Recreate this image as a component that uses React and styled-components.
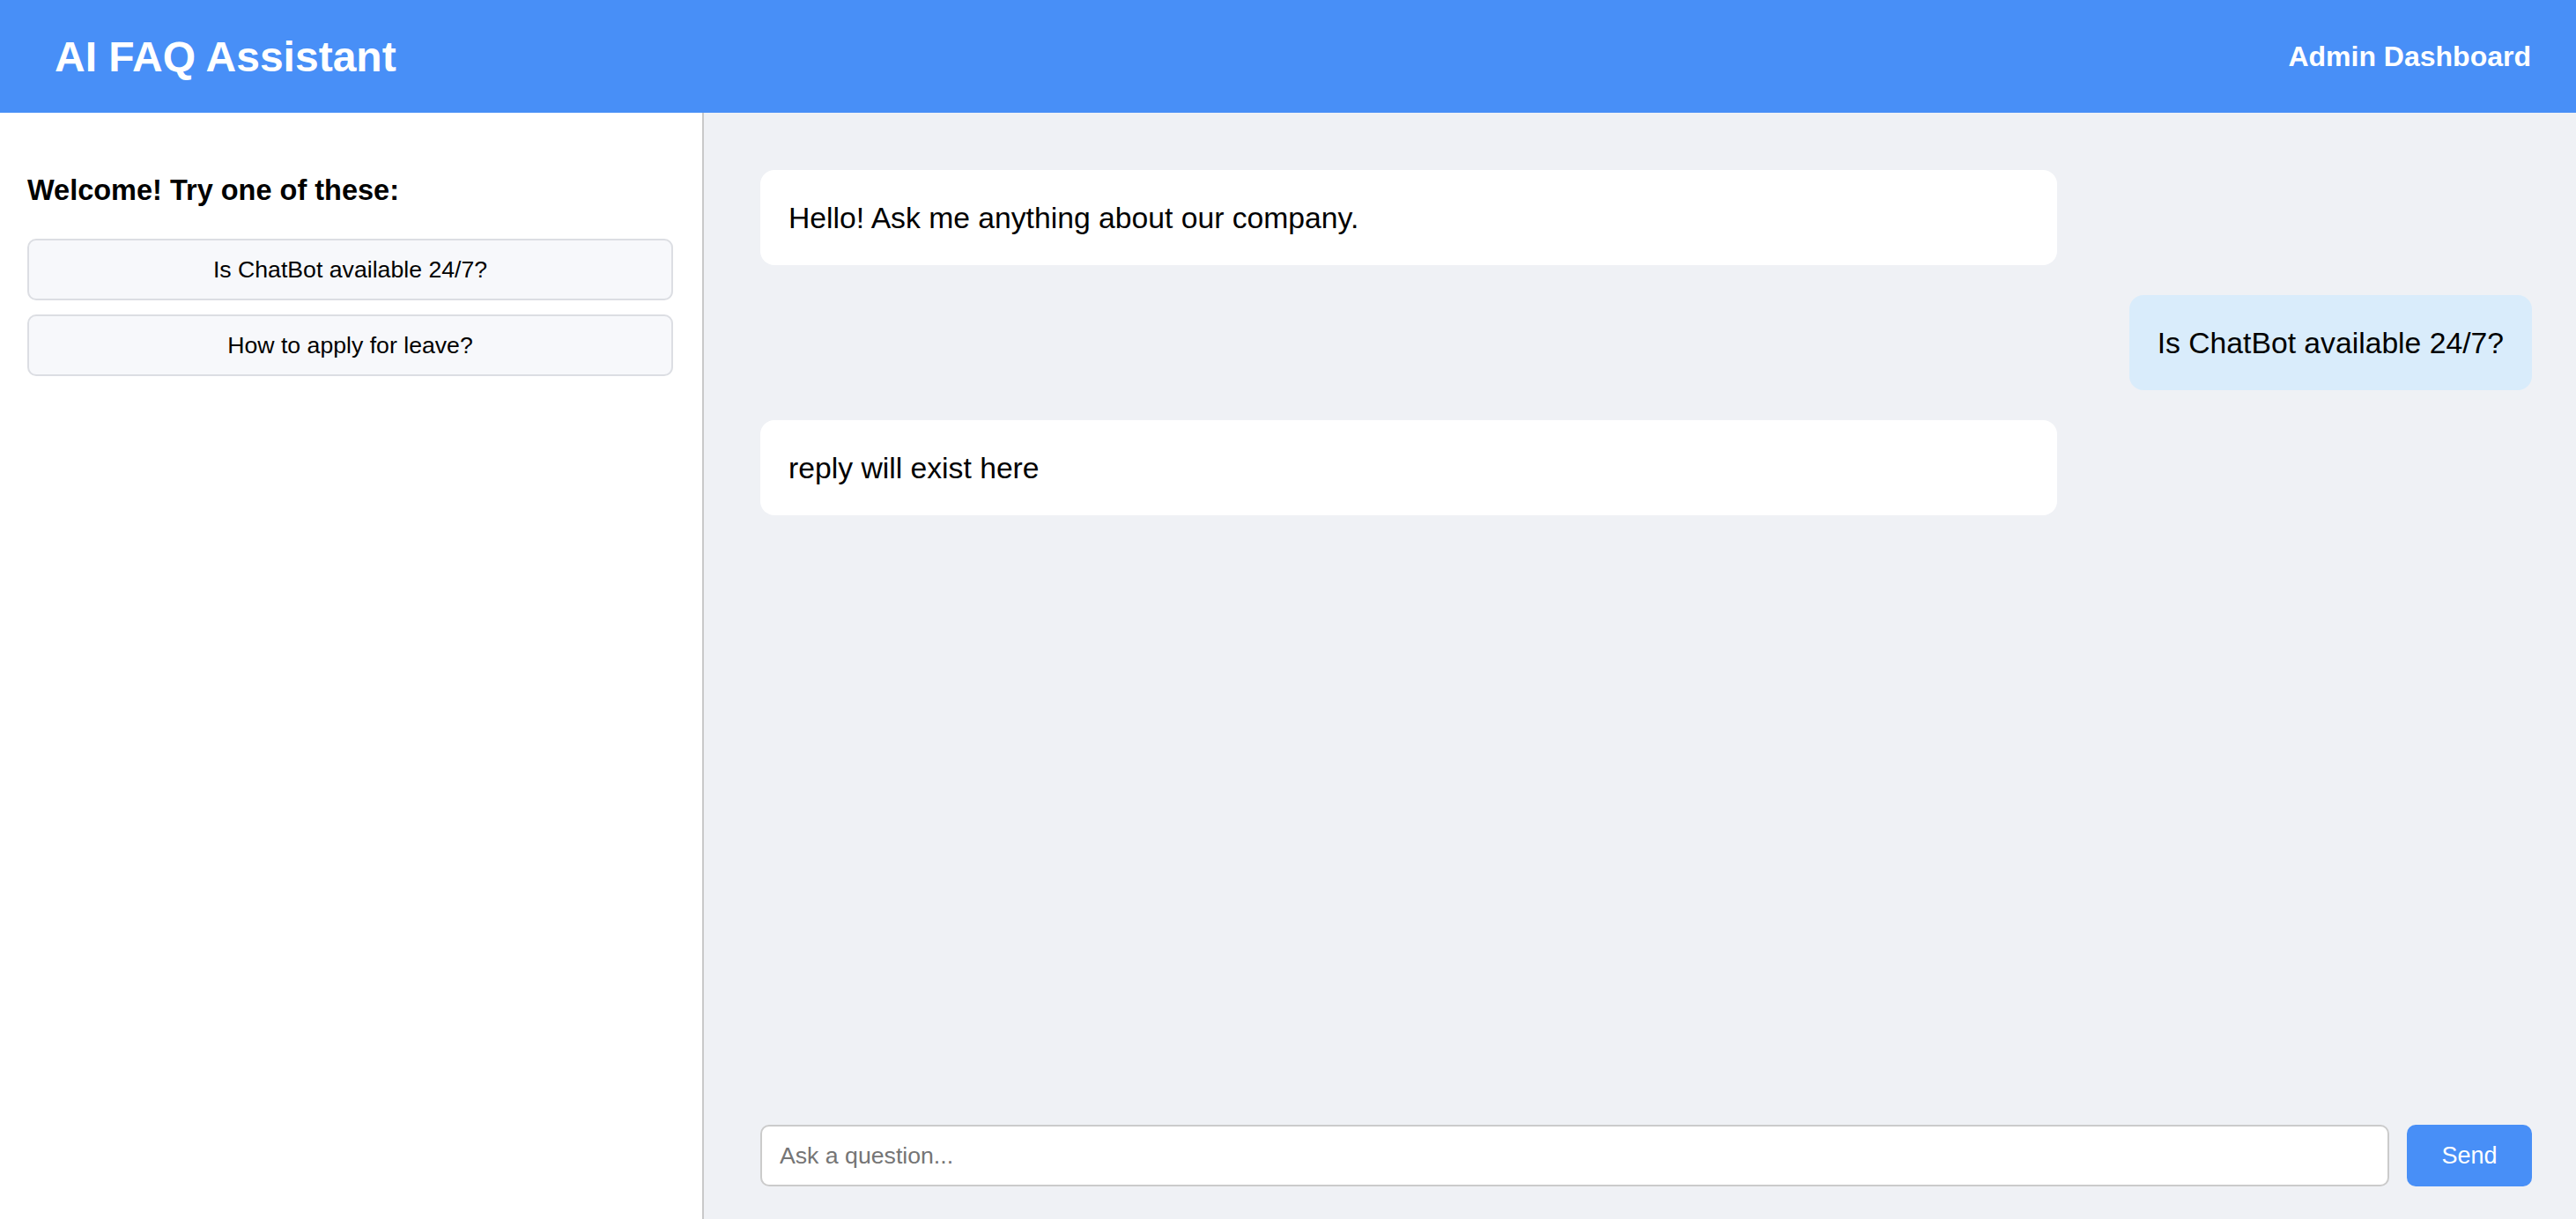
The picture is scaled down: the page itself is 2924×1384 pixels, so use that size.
import styled, { createGlobalStyle } from "styled-components";

const suggestions = ["Is ChatBot available 24/7?", "How to apply for leave?"];

const messages = [
  { from: "bot", text: "Hello! Ask me anything about our company." },
  { from: "user", text: "Is ChatBot available 24/7?" },
  { from: "bot", text: "reply will exist here" },
];

const App = () => {
  return (
    <Page>
      <GlobalStyle />
      <Header>
        <Title>AI FAQ Assistant</Title>
        <NavLink>Admin Dashboard</NavLink>
      </Header>
      <Body>
        <Sidebar>
          <Welcome>Welcome! Try one of these:</Welcome>
          <SuggestionList>
            {suggestions.map((q) => (
              <Suggestion key={q}>{q}</Suggestion>
            ))}
          </SuggestionList>
        </Sidebar>
        <Chat>
          <Messages>
            {messages.map((m, i) => (
              <Bubble key={i} $user={m.from === "user"}>
                {m.text}
              </Bubble>
            ))}
          </Messages>
          <InputRow>
            <Input placeholder="Ask a question..." />
            <SendButton>Send</SendButton>
          </InputRow>
        </Chat>
      </Body>
    </Page>
  );
};

export default App;

const GlobalStyle = createGlobalStyle`
  html, body, #root {
    margin: 0;
    height: 100%;
  }
  body {
    font-family: "Liberation Sans", Arial, sans-serif;
    color: #000;
  }
  * {
    box-sizing: border-box;
  }
`;

const Page = styled.div`
  display: flex;
  flex-direction: column;
  height: 100vh;
`;

const Header = styled.header`
  height: 128px;
  flex-shrink: 0;
  background-color: #488ff7;
  color: #fff;
  display: flex;
  align-items: center;
  justify-content: space-between;
  padding: 0 51px 0 62px;
`;

const Title = styled.h1`
  margin: 0;
  font-size: 48px;
  font-weight: 700;
`;

const NavLink = styled.span`
  font-size: 32px;
  font-weight: 700;
  cursor: pointer;
`;

const Body = styled.div`
  flex: 1;
  display: flex;
  min-height: 0;
`;

const Sidebar = styled.aside`
  width: 799px;
  flex-shrink: 0;
  background: #fff;
  border-right: 2px solid #c9c9c9;
  padding: 70px 33px 0 31px;
`;

const Welcome = styled.h3`
  margin: 0 0 36px;
  font-size: 32.5px;
  line-height: 37px;
  font-weight: 700;
`;

const SuggestionList = styled.div`
  display: flex;
  flex-direction: column;
  gap: 16px;
`;

const Suggestion = styled.button`
  height: 70px;
  width: 100%;
  background: #f7f8fb;
  border: 2px solid #dcdee3;
  border-radius: 10px;
  font-family: "Liberation Sans", Arial, sans-serif;
  font-size: 26.67px;
  color: #000;
  cursor: pointer;
`;

const Chat = styled.main`
  flex: 1;
  display: flex;
  flex-direction: column;
  background: #eff1f5;
  padding: 65px 50px 37px 64px;
`;

const Messages = styled.div`
  flex: 1;
  display: flex;
  flex-direction: column;
  gap: 34px;
  overflow-y: auto;
`;

const Bubble = styled.div`
  align-self: ${(p) => (p.$user ? "flex-end" : "flex-start")};
  width: ${(p) => (p.$user ? "auto" : "1472px")};
  max-width: 1472px;
  background: ${(p) => (p.$user ? "#d9ecfb" : "#fff")};
  border-radius: 16px;
  padding: 34px 32px;
  font-size: 33.7px;
  line-height: 40px;
`;

const InputRow = styled.div`
  display: flex;
  gap: 20px;
  height: 70px;
  flex-shrink: 0;
`;

const Input = styled.input`
  flex: 1;
  height: 100%;
  border: 2px solid #cbcbcb;
  border-radius: 10px;
  background: #fff;
  padding: 0 20px;
  font-family: "Liberation Sans", Arial, sans-serif;
  font-size: 26.67px;
  outline: none;

  &::placeholder {
    color: #757575;
  }
`;

const SendButton = styled.button`
  width: 142px;
  height: 100%;
  border: none;
  border-radius: 10px;
  background: #488ff7;
  color: #fff;
  font-family: "Liberation Sans", Arial, sans-serif;
  font-size: 27px;
  cursor: pointer;
`;
